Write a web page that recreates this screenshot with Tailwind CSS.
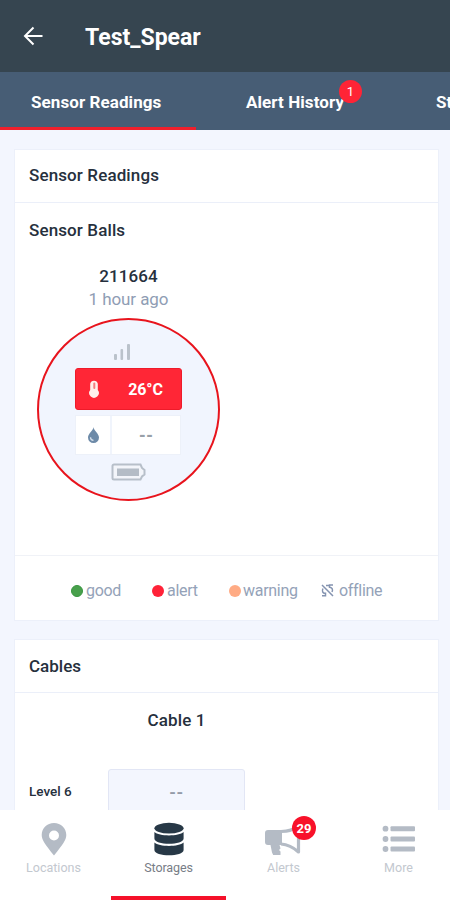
<!DOCTYPE html>
<html lang="en">
<head>
<meta charset="utf-8">
<title>Test_Spear</title>
<script src="https://cdn.jsdelivr.net/npm/@tailwindcss/browser@4"></script>
</head>
<body class="w-[450px] h-[900px] overflow-hidden bg-[#f3f6fe] font-[Roboto,sans-serif] text-[#26303d] flex flex-col">
<header class="h-[72px] shrink-0 bg-[#364550] flex items-center pl-[23px]">
  <svg class="w-5 h-5" viewBox="0 0 20 20" fill="none" stroke="#fff" stroke-width="2"><path d="M19.500 10H2M10.500 1.500L2 10l8.500 8.500"/></svg>
  <h1 class="ml-[42px] mt-[4px] text-[23px] leading-7 font-bold text-white">Test_Spear</h1>
</header>
<nav class="h-[58px] shrink-0 bg-[#475d75] flex text-white font-bold text-[17px] leading-6 overflow-hidden">
  <div class="w-[196px] h-[58px] shrink-0 border-b-[3px] border-[#f0202c] pl-[31px] pt-[18px] whitespace-nowrap tracking-[0.08px]">Sensor Readings</div>
  <div class="w-[196px] shrink-0 pl-[50px] pt-[18px] whitespace-nowrap relative tracking-[0.08px]">Alert History
    <span class="absolute left-[143px] top-[8px] size-[23px] rounded-full bg-[#ff2436] text-[13px] leading-[23px] font-normal text-center">1</span>
  </div>
  <div class="shrink-0 pl-[44px] pt-[18px] whitespace-nowrap">St</div>
</nav>
<main class="h-[680px] shrink-0 overflow-hidden pt-[19px] pl-[14px] pr-[11px] flex flex-col gap-[18px]">
  <section class="h-[472px] shrink-0 bg-white border border-[#ecf0fa] flex flex-col">
    <h2 class="h-[53px] border-b border-[#ebeff9] pl-[14px] pt-[13px] text-[17px] leading-6 font-medium tracking-[0.12px]">Sensor Readings</h2>
    <div class="h-[353px] pt-[15px] border-b border-[#f0f2f7]">
      <h3 class="pl-[14px] text-[17px] leading-6 font-medium tracking-[0.12px]">Sensor Balls</h3>
      <div class="ml-[22px] w-[183px] mt-[22px] flex flex-col items-center">
        <div class="text-[17px] leading-6 font-medium tracking-[0.1px]">211664</div>
        <div class="text-[17px] leading-[22px] text-[#8f9db4] tracking-[-0.08px]">1 hour ago</div>
        <div class="mt-[8px] size-[183px] rounded-full border-[2.5px] border-[#e8141d] bg-[#f1f5fe] flex flex-col items-center pt-[24px]">
          <svg class="w-[18px] h-[16px] -ml-[13px]" viewBox="0 0 18 16" fill="#bac2cb"><rect x="1" y="10" width="3" height="6" rx="1"/><rect x="7.500" y="5" width="2.600" height="11" rx="1"/><rect x="14" y="0" width="3" height="16" rx="1"/></svg>
          <div class="mt-[8px] w-[107px] h-[42px] rounded-[3px] bg-[#ff2636] border border-[#ee1b2a] flex items-center text-white">
            <svg class="ml-[12px] w-[12px] h-[20px]" viewBox="0 0 12 20"><path d="M2.200 4.800a3.900 3.900 0 0 1 7.600 0V11a4.800 4.800 0 1 1-7.600 0Z" fill="#fff0ec"/><path d="M6.300 4.500v4.500" stroke="#f77b7e" stroke-width="2" stroke-linecap="round"/></svg>
            <span class="ml-[18px] mt-[2px] w-[55px] text-center text-[16px] font-bold tracking-[-0.1px]">26°C</span>
          </div>
          <div class="mt-[5px] w-[106px] h-[40px] bg-white border border-[#edf1f9] flex text-[#98a0a8] -ml-[1px]">
            <div class="w-[36px] border-r-2 border-[#f0f4fc] flex items-center justify-center">
              <svg class="w-[11px] h-[16px]" viewBox="0 0 11 16"><path d="M5.500 0C5.500 3.500 0 6.500 0 10.500a5.500 5.500 0 0 0 11 0C11 6.500 5.500 3.500 5.500 0Z" fill="#6d8aa8"/><path d="M2.500 10.200c0 2 1 3 3 3.100" fill="none" stroke="#d5e0ec" stroke-width="1.300"/></svg>
            </div>
            <div class="grow flex items-center justify-center"><span class="mt-[2px] text-[16px] font-black leading-5">--</span></div>
          </div>
          <svg class="mt-[8px] w-[35px] h-[18px]" viewBox="0 0 35 18"><path d="M3 1.500h26.500l1.500 3.500 2.500 2v4.500l-2.500 2-1.500 3H3A1.500 1.500 0 0 1 1.500 15V3A1.500 1.500 0 0 1 3 1.500Z" fill="#f3f5fa" stroke="#b7bfc9" stroke-width="2"/><rect x="6" y="5.500" width="22" height="7.500" fill="#b4bcc6"/></svg>
        </div>
      </div>
    </div>
    <div class="h-[64px] pt-[6px] pl-[56px] flex items-center text-[16px] leading-5 text-[#94a2b8] tracking-[-0.3px]">
      <div class="w-[81px] flex items-center"><i class="size-[12px] rounded-full bg-[#48a04c] border border-[#389540] mr-[3px]"></i>good</div>
      <div class="w-[77px] flex items-center"><i class="size-[12px] rounded-full bg-[#ff2238] mr-[3px]"></i>alert</div>
      <div class="w-[92px] flex items-center"><i class="size-[12px] rounded-full bg-[#ffab84] mr-[2px] shrink-0"></i>warning</div>
      <div class="flex items-center"><svg class="w-[13px] h-[13px] mr-[5px] -mt-[2px]" viewBox="0 0 13 13" fill="none" stroke="#8493b0" stroke-width="1.500"><path d="M1 1l11 11M5 1.500h3M12 1H8.500V4M8.800 3.500c2-.5 3.500 2 2.200 4.500M2 4.500C.6 7 1.800 9.500 4.200 9.300M4.500 8.500v3.200H1"/></svg>offline</div>
    </div>
  </section>
  <section class="h-[260px] shrink-0 bg-white border border-[#ecf0fa]">
    <h2 class="h-[53px] border-b border-[#ebeff9] pl-[14px] pt-[14px] text-[17px] leading-6 font-medium">Cables</h2>
    <div class="ml-[93px] w-[137px] pt-[15px] text-center text-[17px] leading-6 font-medium tracking-[0.1px]">Cable 1</div>
    <div class="mt-[37px] flex">
      <div class="w-[93px] pl-[14px] pt-[12px] text-[13.5px] leading-5 font-medium">Level 6</div>
      <div class="w-[137px] h-[60px] rounded-[3px] bg-[#f3f6fe] border border-[#e2e6f5] pt-[12px] text-center text-[17px] leading-5 text-[#939ba8] font-bold tracking-[0.500px]">--</div>
    </div>
  </section>
</main>
<footer class="h-[90px] shrink-0 bg-white flex text-[12.5px] leading-4 text-[#c3c8cf]">
  <div class="w-[111px] shrink-0 pr-[4px] pt-[12px] flex flex-col items-center">
    <svg class="w-[26px] h-[34px]" viewBox="0 0 26 34"><path fill="#b4bbc5" fill-rule="evenodd" d="M13 1C6 1 .7 6.200.7 13c0 5 3.500 9.500 12.300 20.500C21.800 22.500 25.300 18 25.300 13 25.300 6.200 20 1 13 1Zm0 7.500a5 5 0 1 1 0 10 5 5 0 0 1 0-10Z"/></svg>
    <span class="mt-[4px]">Locations</span>
  </div>
  <div class="w-[115px] shrink-0 border-b-[4px] border-[#f5112a] pt-[12px] flex flex-col items-center text-[#777d86]">
    <svg class="w-[30px] h-[34px]" viewBox="0 0 30 34" fill="#273846"><ellipse cx="15" cy="6.200" rx="14.600" ry="5.400"/><path d="M.4 10C5 14.500 25 14.500 29.600 10V16.500c0 7-29.200 7-29.200 0ZM.4 20.500C5 25 25 25 29.600 20.500v7.500c0 7-29.200 7-29.200 0Z"/></svg>
    <span class="mt-[4px] tracking-[-0.1px]">Storages</span>
  </div>
  <div class="w-[115px] shrink-0 pt-[12px] flex flex-col items-center relative">
    <svg class="w-[36px] h-[34px] -ml-[2px]" viewBox="0 0 36 34" fill="none"><path d="M17 8H3a3 3 0 0 0-3 3v9a3 3 0 0 0 3 3h2.500l1.500 7.500 1.200 2.500h7.300v-3.500l-1.500-1.500 1.500-1.500-1-3.500H17Z" fill="#b4bbc5"/><path d="M16 9.500c8 0 13-2 17.500-6v26.500c-5-4.500-10.500-7.500-17.500-8" stroke="#b4bbc5" stroke-width="3.200" stroke-linejoin="round"/></svg>
    <span class="mt-[4px]">Alerts</span>
    <b class="absolute left-[66px] top-[6px] size-[24px] rounded-full bg-[#f8112a] text-white text-[13px] leading-[25px] text-center">29</b>
  </div>
  <div class="w-[115px] shrink-0 pt-[12px] flex flex-col items-center">
    <svg class="w-[33px] h-[34px] -ml-[1px]" viewBox="0 0 33 34" fill="#b4bbc5"><circle cx="3.500" cy="6.700" r="2.900"/><circle cx="3.500" cy="17" r="2.900"/><circle cx="3.500" cy="27" r="2.900"/><rect x="8.500" y="4.200" width="24.500" height="5" rx="1"/><rect x="8.500" y="14.500" width="24.500" height="5" rx="1"/><rect x="8.500" y="24.500" width="24.500" height="5" rx="1"/></svg>
    <span class="mt-[4px]">More</span>
  </div>
</footer>
</body>
</html>
